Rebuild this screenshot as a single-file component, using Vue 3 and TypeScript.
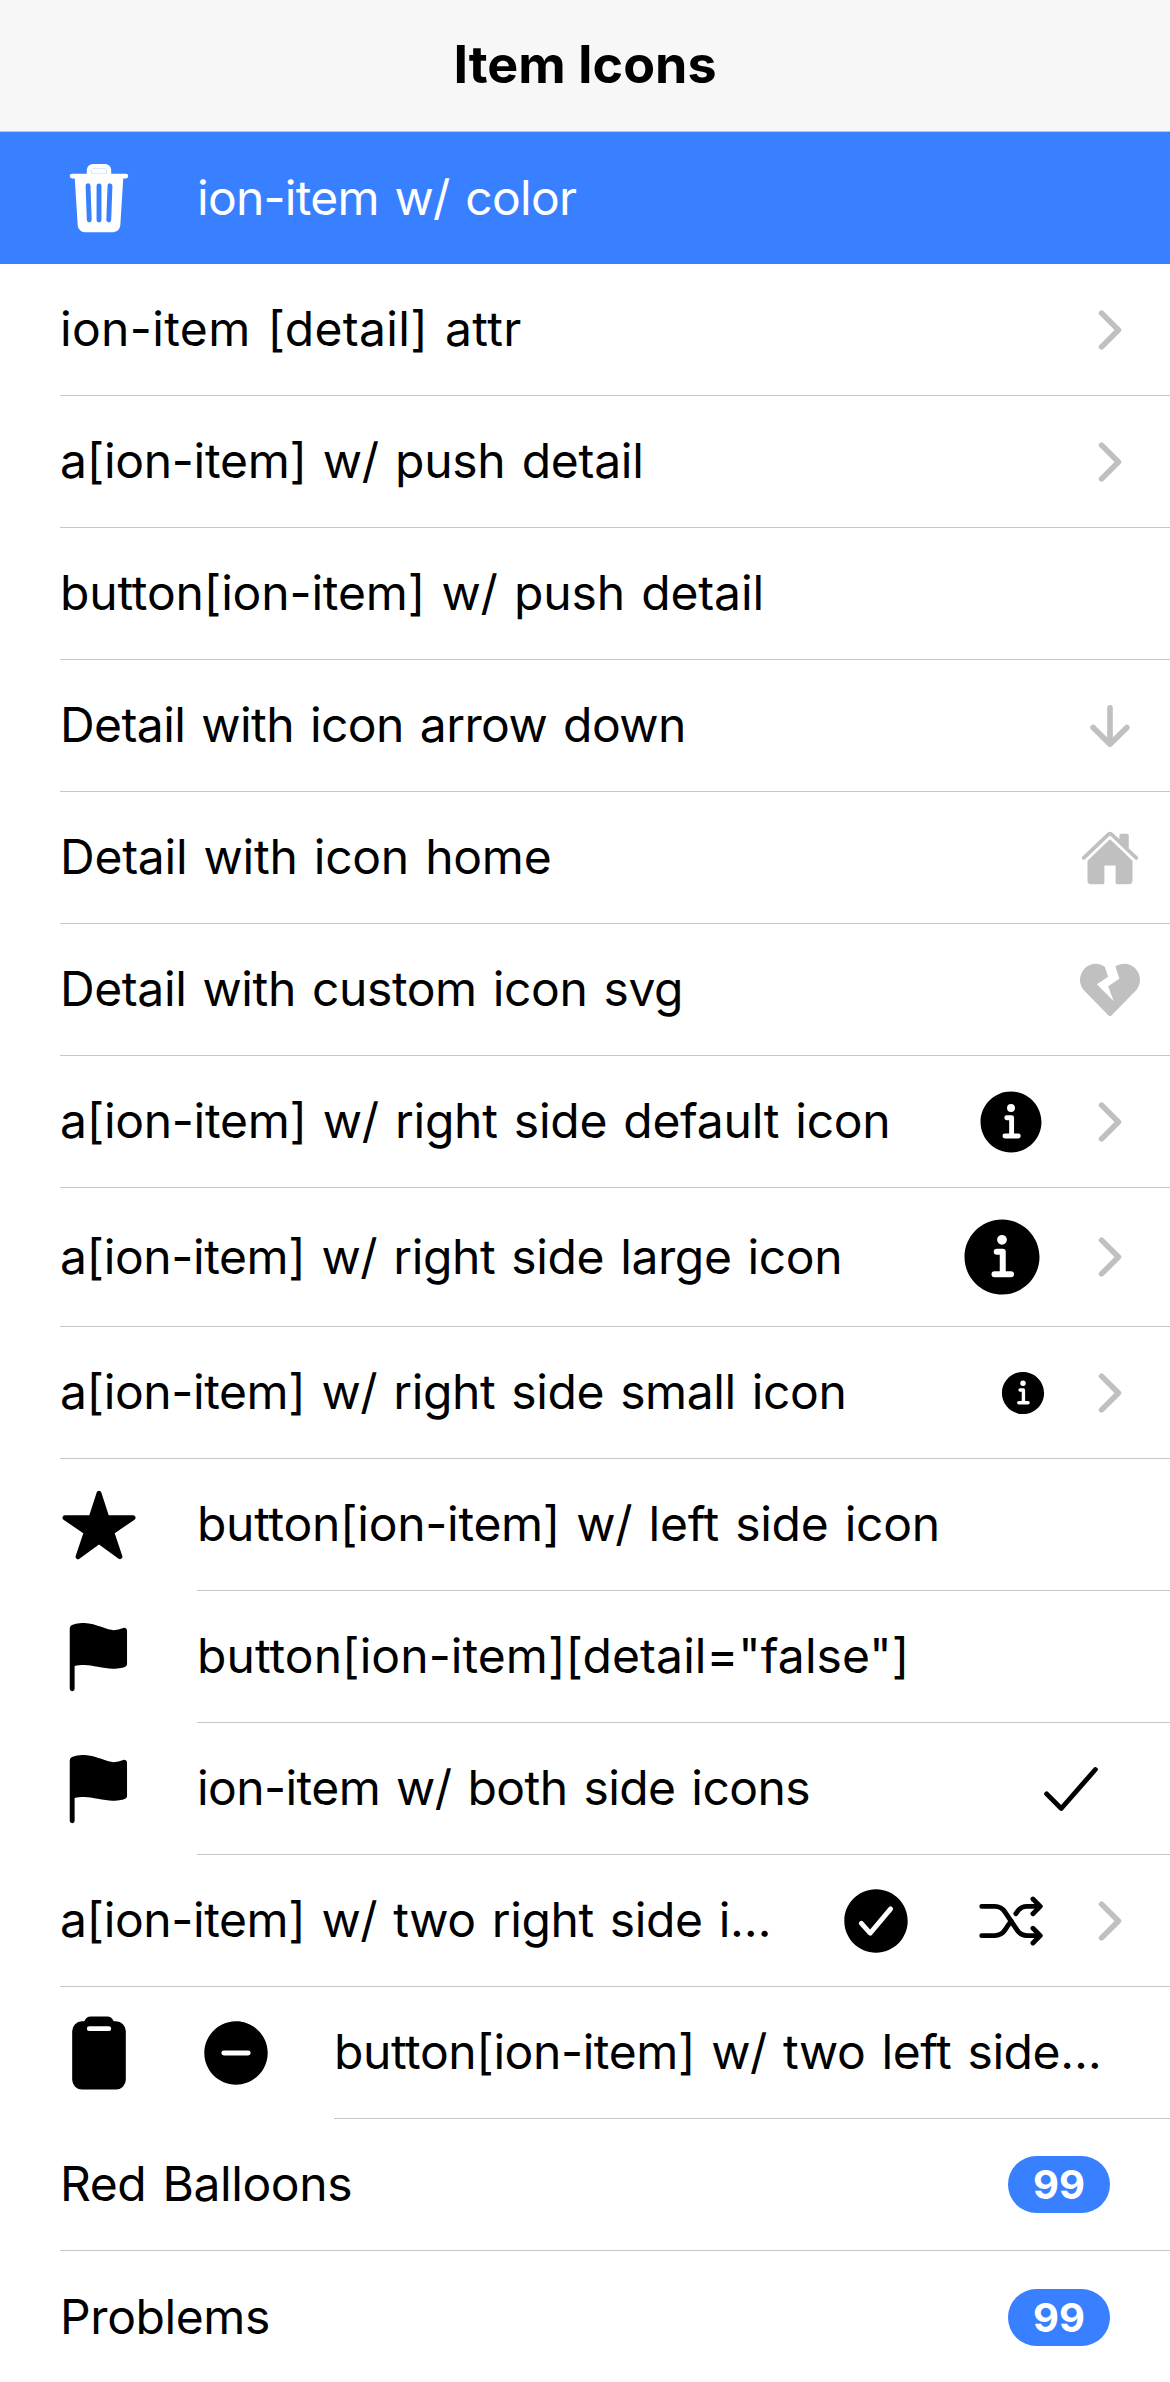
<template>
  <div class="page">
    <header class="toolbar">
      <h1 class="title">Item Icons</h1>
    </header>

    <ul class="list">
      <li
        v-for="row in rows"
        :key="row.label"
        class="item"
        :class="{ 'item--primary': row.primary }"
      >
        <svg
          v-for="name in row.start"
          :key="name"
          class="icon icon--start"
          viewBox="0 0 512 512"
          aria-hidden="true"
        >
          <path
            v-for="d in icons[name].paths"
            :key="d"
            :d="d"
            :class="icons[name].stroke ? 'stroked' : 'filled'"
            :stroke-width="icons[name].stroke"
          />
        </svg>

        <div class="inner" :class="{ 'inner--last': row.last }">
          <span
            class="label"
            :style="row.track ? { letterSpacing: row.track + 'px' } : undefined"
            >{{ row.label }}</span
          >

          <svg
            v-for="name in row.end"
            :key="name"
            class="icon icon--end"
            :class="row.size ? 'icon--' + row.size : ''"
            viewBox="0 0 512 512"
            aria-hidden="true"
          >
            <path
              v-for="d in icons[name].paths"
              :key="d"
              :d="d"
              :class="icons[name].stroke ? 'stroked' : 'filled'"
              :stroke-width="icons[name].stroke"
            />
          </svg>

          <span v-if="row.badge" class="badge">{{ row.badge }}</span>

          <svg
            v-if="row.detail"
            class="detail"
            viewBox="0 0 512 512"
            aria-hidden="true"
          >
            <path
              v-for="d in icons[row.detail].paths"
              :key="d"
              :d="d"
              :class="icons[row.detail].stroke ? 'stroked' : 'filled'"
              :stroke-width="icons[row.detail].stroke"
            />
          </svg>
        </div>
      </li>
    </ul>
  </div>
</template>

<script setup lang="ts">
type IconDef = { paths: string[]; stroke?: number };

const icons: Record<string, IconDef> = {
  trash: {
    paths: [
      "M296 64h-80a7.91 7.91 0 00-8 8v24h96V72a7.91 7.91 0 00-8-8z",
      "M432 96h-96V72a40 40 0 00-40-40h-80a40 40 0 00-40 40v24H80a16 16 0 000 32h17l19 304.92c1.42 26.85 22 47.08 48 47.08h184c26.13 0 46.3-19.78 48-47l19-305h17a16 16 0 000-32zM192.57 416H192a16 16 0 01-16-15.43l-8-224a16 16 0 1132-1.14l8 224A16 16 0 01192.57 416zM272 400a16 16 0 01-32 0V176a16 16 0 0132 0zm32-304h-96V72a7.91 7.91 0 018-8h80a7.91 7.91 0 018 8zm32 304.57A16 16 0 01320 416h-.58A16 16 0 01304 399.43l8-224a16 16 0 1132 1.14z",
    ],
  },
  chevron: { paths: ["M184 112l144 144-144 144"], stroke: 48 },
  arrowDown: { paths: ["M112 268l144 144 144-144M256 392V100"], stroke: 48 },
  home: {
    paths: [
      "M261.56 101.28a8 8 0 00-11.06 0L66.4 277.15a8 8 0 00-2.47 5.79L63.9 448a32 32 0 0032 32H192a16 16 0 0016-16V328a8 8 0 018-8h80a8 8 0 018 8v136a16 16 0 0016 16h96.06a32 32 0 0032-32V282.94a8 8 0 00-2.47-5.79z",
      "M490.91 244.15l-74.8-71.56V64a16 16 0 00-16-16h-48a16 16 0 00-16 16v32l-57.92-55.38C272.77 35.14 264.71 32 256 32c-8.68 0-16.72 3.14-22.14 8.63l-212.7 203.5c-6.22 6-7 15.87-1.34 22.37A16 16 0 0043 267.56L250.5 69.28a8 8 0 0111.06 0l207.52 198.28a16 16 0 0022.59-.44c6.14-6.36 5.63-16.86-.76-22.97z",
    ],
  },
  heartBroken: {
    paths: [
      "M473.7 73.8l-2.4-2.5c-46-47-118-51.7-169.6-14.8L336 159.9l-96 64 48 128-144-144 96-64-28.6-86.5C159.7 19.6 87 24 40.7 71.4l-2.4 2.4C-10.4 123.6-12.5 202.9 31 256l212.1 218.6c7.1 7.3 18.6 7.3 25.7 0L481 255.9c43.5-53 41.4-132.3-7.3-182.1z",
    ],
  },
  info: {
    paths: [
      "M256 56C145.72 56 56 145.72 56 256s89.72 200 200 200 200-89.72 200-200S366.28 56 256 56zm0 82a26 26 0 11-26 26 26 26 0 0126-26zm48 226h-88a16 16 0 010-32h28v-88h-16a16 16 0 010-32h32a16 16 0 0116 16v104h28a16 16 0 010 32z",
    ],
  },
  star: {
    paths: [
      "M394 480a16 16 0 01-9.39-3L256 383.76 127.39 477a16 16 0 01-24.55-18.08L153 310.35 23 221.2a16 16 0 019-29.2h160.38l48.4-148.95a16 16 0 0130.44 0l48.4 149H480a16 16 0 019.05 29.2L359 310.35l50.13 148.53A16 16 0 01394 480z",
    ],
  },
  flag: {
    paths: [
      "M80 480a16 16 0 01-16-16V68.13a24 24 0 0111.9-20.72C88 40.38 112.38 32 160 32c37.21 0 78.83 14.71 115.55 27.68C305.12 70.13 333.05 80 352 80a178 178 0 0063-14.5 18 18 0 0125 16.58v219.36a20 20 0 01-12 18.31c-11.6 5.31-35.48 13.25-84 13.25-26.72 0-60.56-6.08-96.5-12.46C219.08 314.1 185 308 160 308c-30.6 0-56.6 4-64 6.5V464a16 16 0 01-16 16z",
    ],
  },
  checkmark: { paths: ["M416 128L192 384l-96-96"], stroke: 32 },
  checkCircle: {
    paths: [
      "M256 48C141.31 48 48 141.31 48 256s93.31 208 208 208 208-93.31 208-208S370.69 48 256 48zm108.25 138.29l-134.4 160a16 16 0 01-12 5.71h-.27a16 16 0 01-11.89-5.3l-57.6-64a16 16 0 1123.78-21.4l45.29 50.32 122.59-145.91a16 16 0 0124.5 20.58z",
    ],
  },
  shuffle: {
    paths: [
      "M400 304l48 48-48 48M400 112l48 48-48 48M64 352h85.19a80 80 0 0066.56-35.62L256 256",
      "M64 160h85.19a80 80 0 0166.56 35.62l80.5 120.76A80 80 0 00362.81 352H416M416 160h-53.19a80 80 0 00-66.56 35.62L288 208",
    ],
    stroke: 32,
  },
  clipboard: {
    paths: [
      "M368 48h-11.41a8 8 0 01-7.44-5.08A42.18 42.18 0 00309.87 16H202.13a42.18 42.18 0 00-39.28 26.92 8 8 0 01-7.44 5.08H144a64 64 0 00-64 64v320a64 64 0 0064 64h224a64 64 0 0064-64V112a64 64 0 00-64-64zm-48.13 64H192.13a16 16 0 010-32h127.74a16 16 0 010 32z",
    ],
  },
  removeCircle: {
    paths: [
      "M256 48C141.31 48 48 141.31 48 256s93.31 208 208 208 208-93.31 208-208S370.69 48 256 48zm80 224H176a16 16 0 010-32h160a16 16 0 010 32z",
    ],
  },
};

type Row = {
  label: string;
  primary?: boolean;
  start?: string[];
  end?: string[];
  size?: "large" | "small";
  detail?: string;
  badge?: string;
  last?: boolean;
  // letter-spacing override where Inter's brackets/widths drift from the reference
  track?: number;
};

const rows: Row[] = [
  { label: "ion-item w/ color", primary: true, start: ["trash"], track: -0.75 },
  { label: "ion-item [detail] attr", detail: "chevron", track: 0.35 },
  { label: "a[ion-item] w/ push detail", detail: "chevron", track: -0.28 },
  { label: "button[ion-item] w/ push detail", track: -0.15 },
  { label: "Detail with icon arrow down", detail: "arrowDown", track: -0.57 },
  { label: "Detail with icon home", detail: "home", track: -0.25 },
  { label: "Detail with custom icon svg", detail: "heartBroken" },
  { label: "a[ion-item] w/ right side default icon", end: ["info"], detail: "chevron", track: -0.28 },
  { label: "a[ion-item] w/ right side large icon", end: ["info"], size: "large", detail: "chevron" },
  { label: "a[ion-item] w/ right side small icon", end: ["info"], size: "small", detail: "chevron" },
  { label: "button[ion-item] w/ left side icon", start: ["star"], track: -0.27 },
  { label: 'button[ion-item][detail="false"]', start: ["flag"], track: 0.07 },
  { label: "ion-item w/ both side icons", start: ["flag"], end: ["checkmark"], track: -0.57 },
  { label: "a[ion-item] w/ two right side icons", end: ["checkCircle", "shuffle"], detail: "chevron" },
  { label: "button[ion-item] w/ two left side icons", start: ["clipboard", "removeCircle"] },
  { label: "Red Balloons", badge: "99" },
  { label: "Problems", badge: "99", last: true },
];
</script>

<style scoped>
.page {
  width: 1170px;
  height: 2382px;
  overflow: hidden;
  background: #fff;
  font-family: Inter, "Liberation Sans", sans-serif;
  color: #000;
}

.toolbar {
  display: flex;
  align-items: center;
  justify-content: center;
  height: 132px;
  box-sizing: border-box;
  background: #f7f7f7;
  border-bottom: 1px solid #c4c4c4;
}

.title {
  margin: 0;
  font-size: 52px;
  font-weight: 700;
  line-height: 1.2;
}

.list {
  list-style: none;
  margin: 0;
  padding: 0;
}

.item {
  display: flex;
  align-items: center;
  padding-left: 60px;
  font-size: 48px;
  letter-spacing: -0.4px;
  word-spacing: 3px;
}

.item--primary {
  background: #3880ff;
  color: #fff;
  fill: #fff;
}

.inner {
  flex: 1;
  min-width: 0;
  display: flex;
  align-items: center;
  box-sizing: border-box;
  min-height: 132px;
  padding-right: 30px;
  border-bottom: 1px solid #c6c6c8;
}

.item--primary .inner,
.inner--last {
  border-bottom: 0;
}

.label {
  flex: 1;
  min-width: 0;
  margin-right: 30px;
  padding-bottom: 2px;
  overflow: hidden;
  white-space: nowrap;
  text-overflow: ellipsis;
}

.icon {
  flex: none;
  width: 78px;
  height: 78px;
}

.icon--start {
  margin-right: 59px;
}

.icon--end {
  margin: 21px 30px 21px 30px;
}

.icon--end + .icon--end {
  margin-left: 27px;
}

.icon--large {
  width: 96px;
  height: 96px;
}

.icon--small {
  width: 54px;
  height: 54px;
}

.detail {
  flex: none;
  width: 60px;
  height: 60px;
  fill: #c0c0c0;
}

.filled {
  stroke: none;
}

.stroked {
  fill: none;
  stroke: #000;
  stroke-linecap: round;
  stroke-linejoin: round;
}

.detail .stroked {
  stroke: #c0c0c0;
}

.badge {
  flex: none;
  width: 102px;
  height: 57px;
  margin-right: 30px;
  border-radius: 30px;
  background: #3880ff;
  color: #fff;
  font-size: 40px;
  font-weight: 700;
  line-height: 57px;
  letter-spacing: 0;
  text-align: center;
}
</style>
